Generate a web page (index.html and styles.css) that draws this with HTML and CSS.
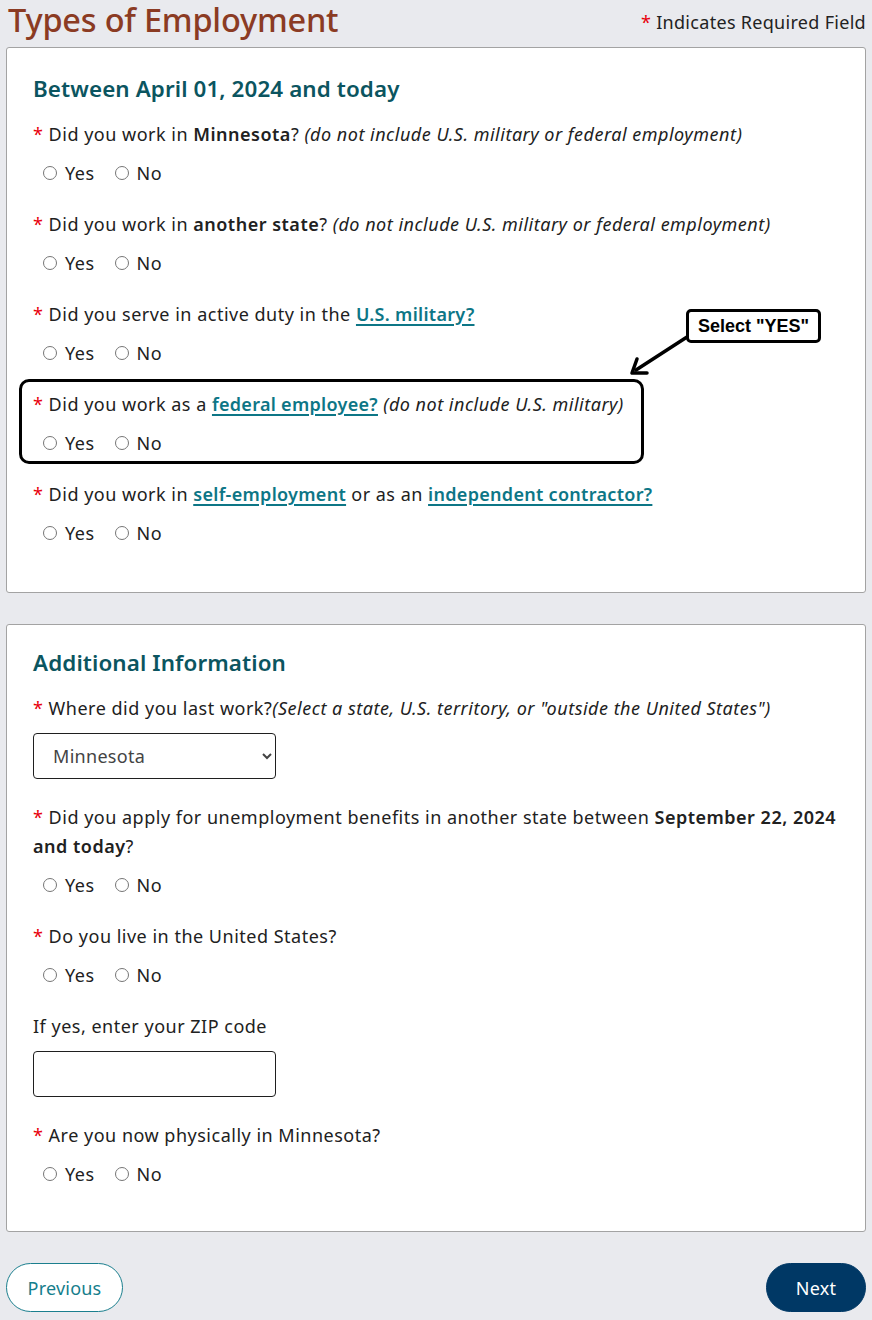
FILE: index.html
```html
<!DOCTYPE html>
<html lang="en">
<head>
<meta charset="utf-8">
<title>Types of Employment</title>
<link rel="stylesheet" href="styles.css">
</head>
<body>
<div class="page">
  <header class="title-row">
    <h1 class="page-title">Types of Employment</h1>
    <div class="req-note"><span class="req">*</span> Indicates Required Field</div>
  </header>

  <section class="card">
    <h2 class="card-title">Between April 01, 2024 and today</h2>

    <div class="q">
      <div class="q-label"><span class="req">*</span> Did you work in <b>Minnesota</b>? <i>(do not include U.S. military or federal employment)</i></div>
      <div class="radios">
        <label class="opt"><input type="radio" name="q1"><span>Yes</span></label>
        <label class="opt"><input type="radio" name="q1"><span>No</span></label>
      </div>
    </div>

    <div class="q">
      <div class="q-label"><span class="req">*</span> Did you work in <b>another state</b>? <i>(do not include U.S. military or federal employment)</i></div>
      <div class="radios">
        <label class="opt"><input type="radio" name="q2"><span>Yes</span></label>
        <label class="opt"><input type="radio" name="q2"><span>No</span></label>
      </div>
    </div>

    <div class="q">
      <div class="q-label"><span class="req">*</span> Did you serve in active duty in the <a href="#" class="lnk">U.S. military?</a></div>
      <div class="radios">
        <label class="opt"><input type="radio" name="q3"><span>Yes</span></label>
        <label class="opt"><input type="radio" name="q3"><span>No</span></label>
      </div>
    </div>

    <div class="q q-highlight">
      <div class="hl-box"></div>
      <div class="callout">Select "YES"</div>
      <svg class="arrow" width="80" height="60" viewBox="0 0 80 60" aria-hidden="true">
        <line x1="67" y1="9" x2="16" y2="42" stroke="#000" stroke-width="3.5" stroke-linecap="round"/>
        <polyline points="17,31 12,45 27,45" fill="none" stroke="#000" stroke-width="3.5" stroke-linecap="round" stroke-linejoin="round"/>
      </svg>
      <div class="q-label"><span class="req">*</span> Did you work as a <a href="#" class="lnk">federal employee?</a> <i>(do not include U.S. military)</i></div>
      <div class="radios">
        <label class="opt"><input type="radio" name="q4"><span>Yes</span></label>
        <label class="opt"><input type="radio" name="q4"><span>No</span></label>
      </div>
    </div>

    <div class="q">
      <div class="q-label"><span class="req">*</span> Did you work in <a href="#" class="lnk">self-employment</a> or as an <a href="#" class="lnk">independent contractor?</a></div>
      <div class="radios">
        <label class="opt"><input type="radio" name="q5"><span>Yes</span></label>
        <label class="opt"><input type="radio" name="q5"><span>No</span></label>
      </div>
    </div>
  </section>

  <section class="card card-2">
    <h2 class="card-title">Additional Information</h2>

    <div class="q">
      <div class="q-label"><span class="req">*</span> Where did you last work?<i>(Select a state, U.S. territory, or "outside the United States")</i></div>
      <select class="field select">
        <option>Minnesota</option>
      </select>
    </div>

    <div class="q">
      <div class="q-label"><span class="req">*</span> Did you apply for unemployment benefits in another state between <b>September 22, 2024 and today</b>?</div>
      <div class="radios">
        <label class="opt"><input type="radio" name="a2"><span>Yes</span></label>
        <label class="opt"><input type="radio" name="a2"><span>No</span></label>
      </div>
    </div>

    <div class="q">
      <div class="q-label"><span class="req">*</span> Do you live in the United States?</div>
      <div class="radios">
        <label class="opt"><input type="radio" name="a3"><span>Yes</span></label>
        <label class="opt"><input type="radio" name="a3"><span>No</span></label>
      </div>
    </div>

    <div class="q">
      <div class="q-label">If yes, enter your ZIP code</div>
      <input type="text" class="field">
    </div>

    <div class="q">
      <div class="q-label"><span class="req">*</span> Are you now physically in Minnesota?</div>
      <div class="radios">
        <label class="opt"><input type="radio" name="a5"><span>Yes</span></label>
        <label class="opt"><input type="radio" name="a5"><span>No</span></label>
      </div>
    </div>
  </section>

  <nav class="actions">
    <button class="btn btn-prev" type="button">Previous</button>
    <button class="btn btn-next" type="button">Next</button>
  </nav>
</div>
</body>
</html>
```

FILE: styles.css
```css
html, body {
  margin: 0;
  padding: 0;
  background: #e9eaee;
}

body {
  font-family: "Noto Sans", "Open Sans", "Liberation Sans", sans-serif;
  font-size: 18px;
  letter-spacing: 0.5px;
  color: #212121;
}

.page {
  padding: 0 6px 7px 6px;
}

.title-row {
  display: flex;
  justify-content: space-between;
  align-items: flex-end;
  height: 47px;
}

.page-title {
  margin: 0 0 0 2px;
  font-size: 32.5px;
  font-weight: 500;
  line-height: 40px;
  letter-spacing: -0.2px;
  color: #8b3b23;
  align-self: flex-start;
}

.req-note {
  line-height: 26px;
  margin-bottom: 12px;
  letter-spacing: 0.3px;
  color: #222;
}

.req {
  color: #e8000b;
}

.card {
  background: #fff;
  border: 1px solid #a3a3a3;
  border-radius: 3px;
  padding: 26px 26px 46px 26px;
}

.card-2 {
  margin-top: 31px;
  padding-top: 23px;
  padding-bottom: 44px;
}

.card-title {
  margin: 0 0 16px 0;
  font-size: 22.4px;
  font-weight: 600;
  line-height: 30px;
  letter-spacing: 0.1px;
  color: #0b5560;
}

.q {
  margin-bottom: 24px;
  position: relative;
}

.q:last-child {
  margin-bottom: 0;
}

.q-label {
  line-height: 29px;
}

.q-label b {
  font-weight: 600;
}

.lnk {
  color: #0d7686;
  font-weight: 600;
  letter-spacing: 0.3px;
  text-decoration: underline;
  text-underline-offset: 3px;
  text-decoration-thickness: 1.5px;
}

.radios {
  display: flex;
  align-items: center;
  margin-top: 11px;
  padding-left: 10px;
  height: 26px;
  gap: 20px;
}

.opt {
  display: flex;
  align-items: center;
  gap: 8px;
}

.opt input {
  margin: 0;
  width: 14px;
  height: 14px;
}

.q-highlight .hl-box {
  position: absolute;
  left: -14px;
  top: -11px;
  width: 625px;
  height: 85px;
  box-sizing: border-box;
  border: 3px solid #000;
  border-radius: 10px;
  pointer-events: none;
}

.callout {
  position: absolute;
  left: 653px;
  top: -81px;
  width: 135px;
  height: 34px;
  box-sizing: border-box;
  border: 3px solid #000;
  border-radius: 5px;
  background: #fff;
  font-family: "Liberation Sans", Arial, sans-serif;
  font-weight: 700;
  font-size: 18px;
  letter-spacing: 0;
  display: flex;
  align-items: center;
  justify-content: center;
  color: #000;
}

.arrow {
  position: absolute;
  left: 587px;
  top: -62px;
}

.field {
  display: block;
  margin-top: 10px;
  width: 243px;
  height: 46px;
  box-sizing: border-box;
  border: 1px solid #1f1f1f;
  border-radius: 4px;
  background: #fff;
  font-family: inherit;
  font-size: 18px;
  letter-spacing: 0.3px;
  padding: 0 14px;
}

.select {
  color: #444;
  padding-left: 15px;
}

.actions {
  display: flex;
  justify-content: space-between;
  margin-top: 31px;
}

.btn {
  font-family: inherit;
  font-size: 18px;
  letter-spacing: 0.2px;
  height: 49px;
  border-radius: 25px;
  cursor: pointer;
}

.btn-prev {
  width: 117px;
  background: #fff;
  color: #157e8c;
  border: 1px solid #1b7f8e;
}

.btn-next {
  width: 100px;
  background: #003865;
  color: #fff;
  border: 1px solid #003865;
}
```
